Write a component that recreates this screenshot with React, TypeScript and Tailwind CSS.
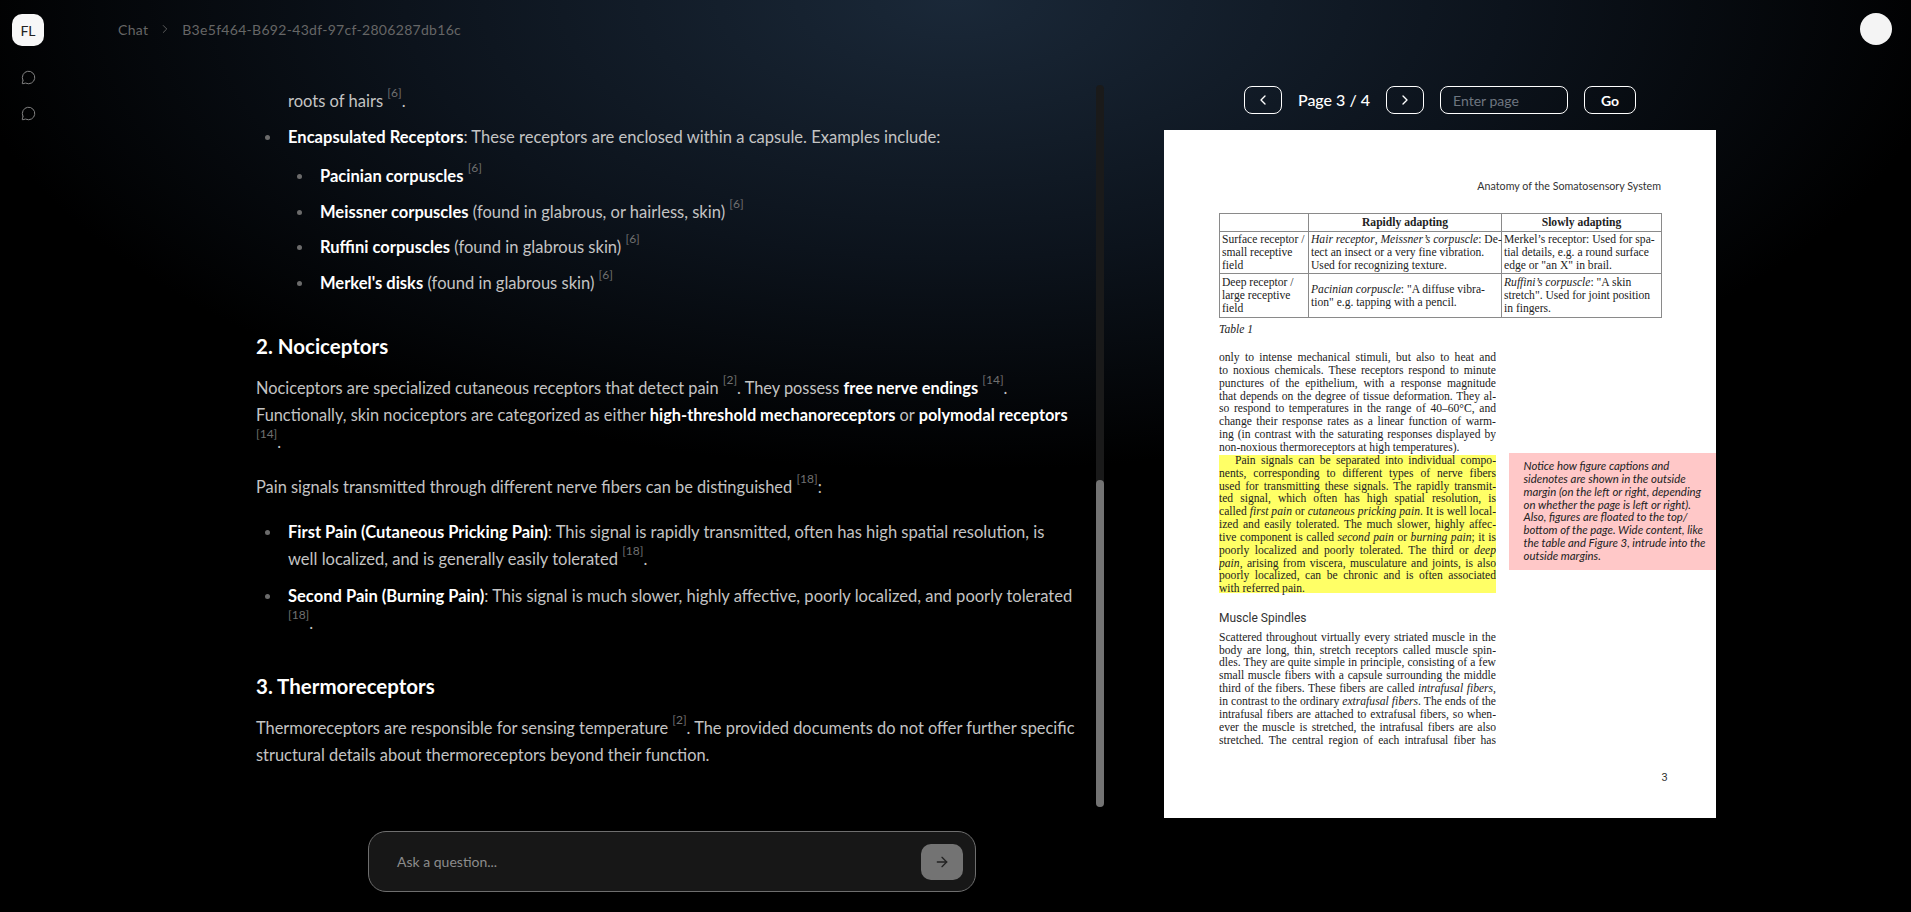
import { ArrowRight, ChevronLeft, ChevronRight, MessageCircle } from "lucide-react";
import type { ReactNode } from "react";

const Cite = ({ n }: { n: number }) => (
  <sup className="align-[4px] text-[12px] leading-none text-[#707070]">[{n}]</sup>
);
const B = ({ children }: { children: ReactNode }) => <strong className="font-bold text-white">{children}</strong>;
const Dot = () => <span className="ml-[9px] mr-[18px] mt-[11px] h-[5px] w-[5px] shrink-0 rounded-full bg-[#6b6b6b]" />;
const Li = ({ className, children }: { className?: string; children: ReactNode }) => (
  <li className={`flex ${className ?? ""}`}>
    <Dot />
    <div>{children}</div>
  </li>
);

const J = ({ children }: { children: ReactNode }) => (
  <div className="h-[12.85px] overflow-hidden leading-[12.85px] [text-align-last:justify]">{children}</div>
);
const L = ({ children }: { children: ReactNode }) => <div className="h-[12.85px] leading-[12.85px] whitespace-nowrap">{children}</div>;

function PdfPage() {
  return (
    <div className="flex h-[688px] w-[552px] flex-col bg-white pl-[55px] text-[#222] font-['Liberation_Serif',serif] text-[11.6px]">
      <div className="mt-[49px] mr-[55px] text-right font-[Lato,sans-serif] text-[10.7px] leading-[13px] text-[#333]">
        Anatomy of the Somatosensory System
      </div>
      <table className="mt-[21px] h-[104px] w-[442px] table-fixed border-collapse border border-[#8a8a8a] border-b-[#222] text-[11.6px] leading-[13px] whitespace-nowrap">
        <colgroup>
          <col className="w-[89px]" />
          <col className="w-[193px]" />
          <col className="w-[160px]" />
        </colgroup>
        <tbody>
          <tr className="h-[18px] font-bold text-center">
            <td className="border border-[#8a8a8a]"></td>
            <td className="border border-[#8a8a8a]">Rapidly adapting</td>
            <td className="border border-[#8a8a8a]">Slowly adapting</td>
          </tr>
          <tr className="h-[42px]">
            <td className="border border-[#8a8a8a] px-[2px]">Surface receptor /<br />small receptive<br />field</td>
            <td className="border border-[#8a8a8a] px-[2px]"><i>Hair receptor</i>, <i>Meissner’s corpuscle</i>: De-<br />tect an insect or a very fine vibration.<br />Used for recognizing texture.</td>
            <td className="border border-[#8a8a8a] px-[2px]">Merkel’s receptor: Used for spa-<br />tial details, e.g. a round surface<br />edge or "an X" in brail.</td>
          </tr>
          <tr className="h-[44px]">
            <td className="border border-[#8a8a8a] px-[2px]">Deep receptor /<br />large receptive<br />field</td>
            <td className="border border-[#8a8a8a] px-[2px]"><i>Pacinian corpuscle</i>: "A diffuse vibra-<br />tion" e.g. tapping with a pencil.</td>
            <td className="border border-[#8a8a8a] px-[2px]"><i>Ruffini’s corpuscle</i>: "A skin<br />stretch". Used for joint position<br />in fingers.</td>
          </tr>
        </tbody>
      </table>
      <div className="mt-[5px] h-[14px] italic leading-[14px]">Table 1</div>
      <div className="mt-[15px] flex">
        <div className="w-[277px] shrink-0">
          <J>only to intense mechanical stimuli, but also to heat and</J>
          <J>to noxious chemicals. These receptors respond to minute</J>
          <J>punctures of the epithelium, with a response magnitude</J>
          <J>that depends on the degree of tissue deformation. They al-</J>
          <J>so respond to temperatures in the range of 40–60°C, and</J>
          <J>change their response rates as a linear function of warm-</J>
          <J>ing (in contrast with the saturating responses displayed by</J>
          <L>non-noxious thermoreceptors at high temperatures).</L>
          <div className="mt-[2px] h-[138px] bg-[#ffff66]">
            <div className="-mt-[2px] pt-[0.1px]">
              <div className="h-[12.85px] overflow-hidden pl-[16px] leading-[12.85px] [text-align-last:justify]">Pain signals can be separated into individual compo-</div>
              <J>nents, corresponding to different types of nerve fibers</J>
              <J>used for transmitting these signals. The rapidly transmit-</J>
              <J>ted signal, which often has high spatial resolution, is</J>
              <J>called <i>first pain</i> or <i>cutaneous pricking pain</i>. It is well local-</J>
              <J>ized and easily tolerated. The much slower, highly affec-</J>
              <J>tive component is called <i>second pain</i> or <i>burning pain</i>; it is</J>
              <J>poorly localized and poorly tolerated. The third or <i>deep</i></J>
              <J><i>pain</i>, arising from viscera, musculature and joints, is also</J>
              <J>poorly localized, can be chronic and is often associated</J>
              <L>with referred pain.</L>
            </div>
          </div>
          <div className="mt-[17px] h-[16px] font-[Roboto,sans-serif] text-[12px] leading-[16px] text-[#333]">Muscle Spindles</div>
          <div className="mt-[6px]">
            <J>Scattered throughout virtually every striated muscle in the</J>
            <J>body are long, thin, stretch receptors called muscle spin-</J>
            <J>dles. They are quite simple in principle, consisting of a few</J>
            <J>small muscle fibers with a capsule surrounding the middle</J>
            <J>third of the fibers. These fibers are called <i>intrafusal fibers</i>,</J>
            <J>in contrast to the ordinary <i>extrafusal fibers</i>. The ends of the</J>
            <J>intrafusal fibers are attached to extrafusal fibers, so when-</J>
            <J>ever the muscle is stretched, the intrafusal fibers are also</J>
            <J>stretched. The central region of each intrafusal fiber has</J>
          </div>
        </div>
        <div className="ml-[12.5px] flex-1">
          <div className="mt-[101px] h-[117px] bg-[#ffc8c8] pl-[15px] pt-[7px] font-[Lato,sans-serif] text-[11.4px] italic leading-[12.85px] text-[#222] whitespace-nowrap">
            Notice how figure captions and<br />
            sidenotes are shown in the outside<br />
            margin (on the left or right, depending<br />
            on whether the page is left or right).<br />
            Also, figures are floated to the top/<br />
            bottom of the page. Wide content, like<br />
            the table and Figure 3, intrude into the<br />
            outside margins.
          </div>
          <div className="mt-[201px] ml-[153px] font-[Roboto,sans-serif] text-[11px] leading-[13px] text-[#333]">3</div>
        </div>
      </div>
    </div>
  );
}

export default function App() {
  return (
    <div className="flex h-[912px] w-full overflow-hidden bg-black bg-[radial-gradient(ellipse_1000px_470px_at_955px_0px,#1a2838_0%,#0c131c_55%,#000000_100%)] font-[Lato,sans-serif]">
      <aside className="flex w-[56px] shrink-0 flex-col items-center pt-[14px]">
        <div className="flex h-[32px] w-[32px] items-center justify-center rounded-[10px] bg-[#f7f7f7] text-[14px] text-[#222]">FL</div>
        <MessageCircle className="mt-[24px] h-[15px] w-[15px] text-[#8a8a8a]" strokeWidth={1.5} />
        <MessageCircle className="mt-[21px] h-[15px] w-[15px] text-[#8a8a8a]" strokeWidth={1.5} />
      </aside>

      <div className="flex min-w-0 flex-1 flex-col">
        <header className="flex h-[58px] shrink-0 items-center pl-[62px] pr-[19px] text-[14px] tracking-[0.3px] text-[#666666]">
          <span>Chat</span>
          <ChevronRight className="mx-[10px] h-[14px] w-[14px]" strokeWidth={1.5} />
          <span>B3e5f464-B692-43df-97cf-2806287db16c</span>
          <div className="ml-auto h-[32px] w-[32px] rounded-full bg-[#f4f4f4]" />
        </header>

        <div className="flex min-h-0 flex-1">
          <section className="flex w-[1048px] shrink-0 flex-col">
            <div className="mt-[27px] flex h-[722px] shrink-0">
              <div className="w-[1040px] overflow-hidden pl-[200px] text-[16.55px] leading-[27px] text-[#c4c4c4] whitespace-nowrap">
                <div className="ml-[32px] mt-[3px]">roots of hairs <Cite n={6} />.</div>
                <ul className="mt-[9px]">
                  <Li><B>Encapsulated Receptors</B>: These receptors are enclosed within a capsule. Examples include:</Li>
                  <li className="ml-[32px] mt-[12px]">
                    <ul className="flex flex-col gap-[8.6px]">
                      <Li><B>Pacinian corpuscles</B> <Cite n={6} /></Li>
                      <Li><B>Meissner corpuscles</B> (found in glabrous, or hairless, skin) <Cite n={6} /></Li>
                      <Li><B>Ruffini corpuscles</B> (found in glabrous skin) <Cite n={6} /></Li>
                      <Li><B>Merkel's disks</B> (found in glabrous skin) <Cite n={6} /></Li>
                    </ul>
                  </li>
                </ul>
                <h2 className="mt-[36px] text-[20.5px] font-bold leading-[27px] text-white">2. Nociceptors</h2>
                <p className="mt-[14px] text-[16.35px]">
                  Nociceptors are specialized cutaneous receptors that detect pain <Cite n={2} />. They possess <B>free nerve endings</B> <Cite n={14} />.<br />
                  Functionally, skin nociceptors are categorized as either <B>high-threshold mechanoreceptors</B> or <B>polymodal receptors</B><br />
                  <Cite n={14} />.
                </p>
                <p className="mt-[18px] text-[16.4px]">Pain signals transmitted through different nerve fibers can be distinguished <Cite n={18} />:</p>
                <ul className="mt-[19px] flex flex-col gap-[10px]">
                  <Li><B>First Pain (Cutaneous Pricking Pain)</B>: This signal is rapidly transmitted, often has high spatial resolution, is<br />well localized, and is generally easily tolerated <Cite n={18} />.</Li>
                  <Li><B>Second Pain (Burning Pain)</B>: This signal is much slower, highly affective, poorly localized, and poorly tolerated<br /><Cite n={18} />.</Li>
                </ul>
                <h2 className="mt-[36px] text-[20.5px] font-bold leading-[27px] text-white">3. Thermoreceptors</h2>
                <p className="mt-[14px] text-[16.4px]">
                  Thermoreceptors are responsible for sensing temperature <Cite n={2} />. The provided documents do not offer further specific<br />
                  structural details about thermoreceptors beyond their function.
                </p>
              </div>
              <div className="flex h-full w-[8px] flex-col justify-end rounded-full bg-[#1a1a1a]">
                <div className="h-[327px] rounded-full bg-[#737373]" />
              </div>
            </div>
            <div className="ml-[312px] mt-[24px] flex h-[61px] w-[608px] items-center rounded-[18px] border border-[#6e6e6e] bg-[#171717] pl-[28px] pr-[12px]">
              <span className="-mt-[1px] text-[14px] text-[#8c8c8c]">Ask a question...</span>
              <button className="ml-auto flex h-[36px] w-[42px] items-center justify-center rounded-[10px] bg-[#737373]">
                <ArrowRight className="h-[16px] w-[16px] text-[#222]" strokeWidth={2} />
              </button>
            </div>
          </section>

          <section className="flex flex-1 flex-col items-center pr-[135px] pl-[0px]">
            <div className="mt-[28px] flex h-[28px] items-center text-white">
              <button className="flex h-[28px] w-[38px] items-center justify-center rounded-lg border border-white">
                <ChevronLeft className="h-[16px] w-[16px]" />
              </button>
              <span className="mx-[16px] text-[16px] font-medium">Page 3 / 4</span>
              <button className="flex h-[28px] w-[38px] items-center justify-center rounded-lg border border-white">
                <ChevronRight className="h-[16px] w-[16px]" />
              </button>
              <div className="ml-[16px] flex h-[28px] w-[128px] items-center rounded-lg border border-white pl-[12px] text-[14px] text-[#6e7680]">Enter page</div>
              <button className="ml-[16px] flex h-[28px] w-[52px] items-center justify-center rounded-lg border border-white text-[14px] font-bold">Go</button>
            </div>
            <div className="mt-[16px]">
              <PdfPage />
            </div>
          </section>
        </div>
      </div>
    </div>
  );
}
